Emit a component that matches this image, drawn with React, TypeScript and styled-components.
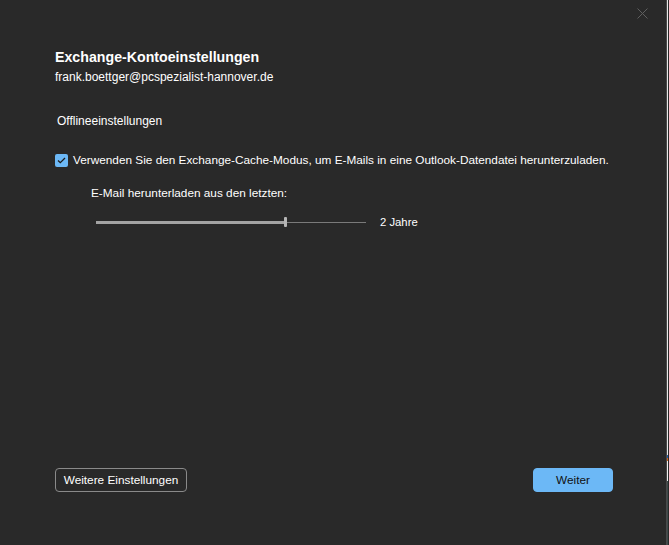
import React from "react";
import styled, { createGlobalStyle } from "styled-components";

const Global = createGlobalStyle`
  html, body { margin: 0; padding: 0; background: #292929; }
  body { font-family: "Liberation Sans", Arial, sans-serif; color: #ffffff; }
  #root { height: 545px; }
`;

const Screen = styled.div`
  display: flex;
  width: 669px;
  height: 545px;
  overflow: hidden;
`;

const Dialog = styled.div`
  position: relative;
  display: flex;
  flex-direction: column;
  width: 667px;
  height: 545px;
  box-sizing: border-box;
  padding: 47px 53px 53px 55px;
  background: #292929;
  border-right: 1px solid #4a4a4a;
`;

const Behind = styled.div`
  display: flex;
  flex-direction: column;
  width: 1px;
  background: #3a3a3a;
`;

const BehindPart = styled.div<{ $h: number; $c: string }>`
  height: ${(p) => p.$h}px;
  background: ${(p) => p.$c};
`;

const Close = styled.button`
  position: absolute;
  top: 6px;
  right: 17px;
  width: 14px;
  height: 14px;
  padding: 0;
  border: none;
  background: transparent;
  display: flex;
  align-items: center;
  justify-content: center;
`;

const Title = styled.h1`
  margin: 0;
  font-size: 14.2px;
  line-height: 20px;
  font-weight: 700;
  white-space: nowrap;
`;

const Account = styled.div`
  margin-top: 1px;
  font-size: 12px;
  line-height: 18px;
  white-space: nowrap;
`;

const Section = styled.div`
  margin-top: 26px;
  padding-left: 2px;
  font-size: 12px;
  line-height: 18px;
`;

const CheckRow = styled.label`
  margin-top: 21px;
  display: flex;
  align-items: center;
  gap: 5px;
  font-size: 11.8px;
  line-height: 18px;
  white-space: nowrap;
`;

const CheckBox = styled.span`
  width: 13px;
  height: 13px;
  flex: none;
  border-radius: 2px;
  background: #6cb8f6;
  display: flex;
  align-items: center;
  justify-content: center;
`;

const Indented = styled.div`
  margin-top: 15px;
  padding-left: 36px;
  font-size: 11.8px;
  line-height: 18px;
`;

const SliderRow = styled.div`
  margin-top: 10px;
  padding-left: 41px;
  display: flex;
  align-items: center;
  gap: 14px;
  height: 20px;
`;

const Track = styled.div`
  position: relative;
  width: 270px;
  height: 1px;
  background: #7a7a7a;
`;

const Fill = styled.div`
  position: absolute;
  left: 0;
  top: -1px;
  height: 3px;
  background: #a3a3a3;
`;

const Thumb = styled.div`
  position: absolute;
  top: -5px;
  width: 3px;
  height: 10px;
  margin-left: -1px;
  background: #b5b5b5;
  border-radius: 1px;
`;

const Value = styled.span`
  font-size: 11.3px;
  line-height: 18px;
`;

const Footer = styled.div`
  margin-top: auto;
  display: flex;
  justify-content: space-between;
  align-items: center;
`;

const Button = styled.button<{ $primary?: boolean }>`
  height: 24px;
  box-sizing: border-box;
  padding: 0;
  width: ${(p) => (p.$primary ? "80px" : "132px")};
  border-radius: 4px;
  font-family: "Liberation Sans", Arial, sans-serif;
  font-size: 11.8px;
  white-space: nowrap;
  border: 1px solid ${(p) => (p.$primary ? "#6cb8f6" : "#8a8a8a")};
  background: ${(p) => (p.$primary ? "#6cb8f6" : "#292929")};
  color: ${(p) => (p.$primary ? "#111111" : "#ffffff")};
`;

export default function App() {
  const pct = 70;
  return (
    <>
      <Global />
      <Screen>
        <Dialog>
          <Close aria-label="Schließen">
            <svg width="11" height="11" viewBox="0 0 11 11">
              <path d="M0.5 0.5 L10.5 10.5 M10.5 0.5 L0.5 10.5" stroke="#5f5f5f" strokeWidth="1" />
            </svg>
          </Close>
          <Title>Exchange-Kontoeinstellungen</Title>
          <Account>frank.boettger@pcspezialist-hannover.de</Account>
          <Section>Offlineeinstellungen</Section>
          <CheckRow>
            <CheckBox>
              <svg width="9" height="7" viewBox="0 0 9 7">
                <path d="M1 3.5 L3.3 5.7 L8 1" fill="none" stroke="#1b1b1b" strokeWidth="1.3" />
              </svg>
            </CheckBox>
            Verwenden Sie den Exchange-Cache-Modus, um E-Mails in eine Outlook-Datendatei herunterzuladen.
          </CheckRow>
          <Indented>E-Mail herunterladen aus den letzten:</Indented>
          <SliderRow>
            <Track>
              <Fill style={{ width: `${pct}%` }} />
              <Thumb style={{ left: `${pct}%` }} />
            </Track>
            <Value>2 Jahre</Value>
          </SliderRow>
          <Footer>
            <Button>Weitere Einstellungen</Button>
            <Button $primary>Weiter</Button>
          </Footer>
        </Dialog>
        <Behind>
          <BehindPart $h={455} $c="#e8e8e8" />
          <BehindPart $h={3} $c="#2a5fa8" />
          <BehindPart $h={3} $c="#d86a1a" />
          <BehindPart $h={20} $c="#f0f0f0" />
          <BehindPart $h={64} $c="#3d4a4a" />
        </Behind>
      </Screen>
    </>
  );
}
